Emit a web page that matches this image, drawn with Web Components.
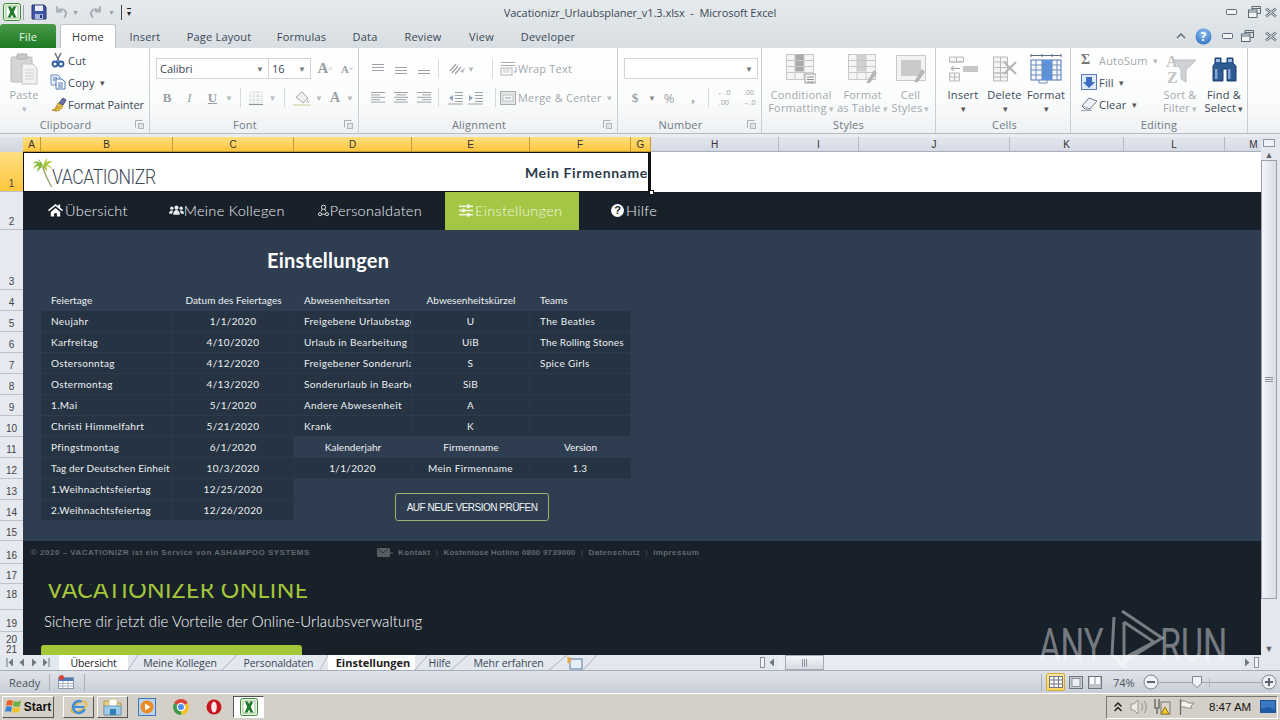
<!DOCTYPE html>
<html lang="de">
<head>
<meta charset="utf-8">
<title>Vacationizr_Urlaubsplaner_v1.3.xlsx - Microsoft Excel</title>
<style>
  html, body { margin: 0; height: 720px; width: 1280px; overflow: hidden; }
  body { font-family: "Open Sans", "Liberation Sans", sans-serif; font-size: 11px; }
</style>
</head>
<body>
<excel-window></excel-window>
<script>
const ICONS = {
  excel: '<svg viewBox="0 0 18 18" width="18" height="18"><rect x=".5" y=".5" width="17" height="17" rx="2" fill="#e8f2e0" stroke="#3f8a3c"/><rect x="3" y="3" width="12" height="12" fill="#fff" stroke="#9dc59a"/><path d="M5 3.5h3l1 2.5 1.2-2.5h3L10.8 9l2.6 5.5h-3L9 11.6l-1.3 2.9h-3L7.2 9z" fill="#1f7a2a"/></svg>',
  save: '<svg viewBox="0 0 16 16" width="16" height="16"><path d="M1 1h12l2 2v12H1z" fill="#3f55a8" stroke="#27346f"/><rect x="4" y="1.5" width="8" height="5.5" fill="#e9eef8"/><rect x="4" y="10" width="8" height="5" fill="#a9b7dc"/><rect x="9" y="11" width="2" height="3" fill="#27346f"/></svg>',
  undo: '<svg viewBox="0 0 14 14" width="14" height="14"><path d="M3 1.5v5h5M3.4 6.3C5.5 3.5 10 3.7 11.5 6.5c1 2 .4 4.3-1.5 6" fill="none" stroke="#a9b0b8" stroke-width="2"/></svg>',
  redo: '<svg viewBox="0 0 14 14" width="14" height="14"><path d="M11 1.5v5H6M10.6 6.3C8.5 3.5 4 3.7 2.5 6.5c-1 2-.4 4.3 1.5 6" fill="none" stroke="#a9b0b8" stroke-width="2"/></svg>',
  paste: '<svg viewBox="0 0 28 32" width="28" height="32"><rect x="1" y="4" width="21" height="25" rx="1" fill="#d5d5d3" stroke="#bdbdbb"/><rect x="7" y="1" width="10" height="5" rx="1" fill="#c6c6c4" stroke="#aeaeac"/><path d="M12 11h11l4 4v16H12z" fill="#f2f2f1" stroke="#c4c4c4"/><path d="M15 17h9M15 20h9M15 23h9M15 26h9" stroke="#d0d0d0"/></svg>',
  cut: '<svg viewBox="0 0 16 16" width="16" height="16"><path d="M5 1l4 8M11 1L7 9" stroke="#6a7683" stroke-width="1.6" fill="none"/><circle cx="5" cy="12" r="2.5" fill="#fff" stroke="#2f5ea8" stroke-width="1.8"/><circle cx="11" cy="12" r="2.5" fill="#fff" stroke="#2f5ea8" stroke-width="1.8"/></svg>',
  copy: '<svg viewBox="0 0 16 16" width="16" height="16"><path d="M1 1h7l2 2v8H1z" fill="#e9eef7" stroke="#6f8ec0"/><path d="M6 5h6l3 3v7H6z" fill="#fff" stroke="#4f74b4"/><path d="M3 4h4M3 6h2M8 9h5M8 11h5M8 13h5" stroke="#4f74b4"/></svg>',
  painter: '<svg viewBox="0 0 18 16" width="18" height="16"><path d="M9 7l4-5 3 2-3 5z" fill="#6d6fa8" stroke="#474a80"/><path d="M2 14c3 0 4-3 6-7l5 3c-2 3-3 5-7 5z" fill="#e9c257" stroke="#b58d27"/><path d="M5 14l3-4M8 13l2-3" stroke="#b58d27"/></svg>',
  launcher: '<svg viewBox="0 0 9 9" width="9" height="9"><path d="M.5.5h7M.5.5v7" stroke="#a7adb4" fill="none"/><rect x="3.5" y="3.5" width="5" height="5" fill="#dfe3e7" stroke="#b1b7bd"/></svg>',
  border: '<svg viewBox="0 0 14 14" width="14" height="14"><path d="M1 1h12v12H1zM1 5h12M1 9h12M5 1v12M9 1v12" stroke="#c6c9cd" stroke-dasharray="1 1" fill="none"/><path d="M0 13.5h14" stroke="#8c9198"/></svg>',
  fill: '<svg viewBox="0 0 18 16" width="18" height="16"><path d="M3 7l6-5 6 6-5 5z" fill="#f0f0f0" stroke="#a8a8a8"/><path d="M14 9c2 2 2 4 1 4s-1-2-1-4z" fill="#b9b9b9"/><rect x="0" y="14" width="18" height="2" fill="#e3e4c6"/></svg>',
  alignTop: lines([[2,14],[2,14],[2,14]], 2),
  alignMid: lines([[2,14],[2,14],[2,14]], 5),
  alignBot: lines([[2,14],[2,14],[2,14]], 8),
  alignL: lines([[1,15],[1,10],[1,15],[1,10],[1,15]], 1, 2.4),
  alignC: lines([[1,15],[3,13],[1,15],[3,13],[1,15]], 1, 2.4),
  alignR: lines([[1,15],[6,15],[1,15],[6,15],[1,15]], 1, 2.4),
  orient: '<svg viewBox="0 0 18 14" width="18" height="14"><path d="M2 9l6-7M4 11l6-7M7 12l6-7" stroke="#9da1a6" stroke-width="1.3"/><path d="M12 9l5-3-2 5" fill="#b5b9bd"/></svg>',
  indentL: '<svg viewBox="0 0 16 14" width="16" height="14"><path d="M7 1.5h8M7 4.5h8M7 7.5h8M7 10.5h8M0 13h15" stroke="#9ea3a8"/><path d="M5 4L1 7l4 3z" fill="#8ea3bf"/></svg>',
  indentR: '<svg viewBox="0 0 16 14" width="16" height="14"><path d="M7 1.5h8M7 4.5h8M7 7.5h8M7 10.5h8M0 13h15" stroke="#9ea3a8"/><path d="M1 4l4 3-4 3z" fill="#8ea3bf"/></svg>',
  wrap: '<svg viewBox="0 0 18 15" width="18" height="15"><path d="M1 1.5h14M1 4.5h14" stroke="#a9adb1"/><rect x="1" y="7" width="11" height="7" fill="#fff" stroke="#b0b4b8"/><path d="M3 9h7M3 11h7" stroke="#c4c7ca"/><path d="M16 6v5h-2" stroke="#8ea3bf" fill="none"/></svg>',
  merge: '<svg viewBox="0 0 16 14" width="16" height="14"><rect x=".5" y=".5" width="15" height="13" fill="#e3e5e7" stroke="#a9adb1"/><rect x="3" y="4" width="10" height="6" fill="#f7f7f7" stroke="#c0c3c6"/><path d="M5 7h6" stroke="#8ea3bf"/></svg>',
  cond: grid('#a7a9ab', '<rect x="19" y="20" width="11" height="9" fill="#f4f4f4" stroke="#9fa2a5"/><path d="M21 23h7M21 25.5h7M21 28h7" stroke="#8c9093"/>'),
  table: grid('#cfd1d3', '<path d="M18 29l8-13 3 3-7 10z" fill="#b3b5b7"/>'),
  cellst: '<svg viewBox="0 0 30 28" width="30" height="28"><rect x=".5" y=".5" width="29" height="25" fill="#f3f3f3" stroke="#c9cbcd"/><rect x="5" y="5" width="20" height="16" fill="#c9cacc"/><path d="M18 27l8-13 3 3-7 10z" fill="#b3b5b7"/></svg>',
  insert: '<svg viewBox="0 0 31 26" width="31" height="26"><path d="M1.5 1h14v5h-14zM1.5 6h14M8.5 1v5M1.5 17h10v8h-10zM1.5 21h10M6.5 17v8" fill="#f6f6f6" stroke="#b7babd"/><rect x="15" y="10" width="15" height="6" fill="#c5c7c9"/><path d="M3 12.5h9M3 12.5l3-2.5M3 12.5l3 2.5" stroke="#a0a3a6" fill="none"/></svg>',
  del: '<svg viewBox="0 0 26 26" width="26" height="26"><path d="M1.5 1h14v16h-14zM1.5 6h14M1.5 11.5h14M1.5 17h14v8h-14zM1.5 21h14M8.5 1v24" fill="#f4f4f4" stroke="#b7babd"/><path d="M12 6l12 12M24 6L12 18" stroke="#b3b5b8" stroke-width="2"/></svg>',
  format: '<svg viewBox="0 0 32 30" width="32" height="30"><rect x="1" y="6" width="30" height="20" fill="#f4f8fd" stroke="#4f74b4"/><rect x="12" y="6" width="10" height="20" fill="#5a93e0"/><path d="M6 6v20M12 6v20M22 6v20M27 6v20M1 11h30M1 16h30M1 21h30" stroke="#6d8cb8"/><path d="M1 1.5h30M1 0v3M31 0v3M12 0v3M22 0v3" stroke="#5a6a7e"/><path d="M9 26v3h8v-3" fill="none" stroke="#6d8cb8"/></svg>',
  fillDown: '<svg viewBox="0 0 16 16" width="16" height="16"><rect x=".5" y=".5" width="15" height="15" fill="#dfe9f7" stroke="#5a7fb8"/><path d="M5 3h6v5h3l-6 6-6-6h3z" fill="#3d6fc0"/></svg>',
  clear: '<svg viewBox="0 0 17 14" width="17" height="14"><path d="M1 9l7-8 8 3-7 8z" fill="#eef1f5" stroke="#6f7d90"/><path d="M1 9l3 3h5" fill="#fff" stroke="#6f7d90"/><path d="M0 13.5h11" stroke="#a9adb3"/></svg>',
  sortfilter: '<svg viewBox="0 0 32 32" width="32" height="32"><text x="2" y="14" font-family="Liberation Serif, serif" font-weight="700" font-size="16" fill="#c2c4c7">A</text><text x="3" y="30" font-family="Liberation Serif, serif" font-weight="700" font-size="16" fill="#c2c4c7">Z</text><path d="M10 7h22L22 17v12l-5-3v-9z" fill="#cfd1d4" stroke="#bdbfc2"/></svg>',
  binoc: '<svg viewBox="0 0 28 28" width="28" height="28"><path d="M5 3h6v5h6V3h6v5l3 3v15h-9V14h-4v12H3V11l2-3z" fill="#2f5b93" stroke="#1d3f6e"/><rect x="5" y="14" width="2.5" height="10" fill="#7fa5d5"/><rect x="18" y="14" width="2.5" height="10" fill="#7fa5d5"/><rect x="6" y="4" width="4" height="3" fill="#9bbbe0"/><rect x="18" y="4" width="4" height="3" fill="#9bbbe0"/></svg>',
  help: '<svg viewBox="0 0 17 17" width="17" height="17"><defs><radialGradient id="h" cx=".5" cy=".3" r=".8"><stop offset="0" stop-color="#8fc0f0"/><stop offset="1" stop-color="#2a6bc0"/></radialGradient></defs><circle cx="8.5" cy="8.5" r="8" fill="url(#h)"/></svg>',
  chevUp: '<svg viewBox="0 0 10 8" width="10" height="8"><path d="M1 6l4-4 4 4" fill="none" stroke="#5b6670" stroke-width="1.4"/></svg>',
  min: '<svg viewBox="0 0 11 7" width="11" height="7"><rect x=".5" y=".5" width="10" height="5" rx="1" fill="#f1f3f5" stroke="#5c6873"/></svg>',
  restore: '<svg viewBox="0 0 13 12" width="13" height="12"><path d="M4 .5h8.5v7H9M4 .5V4" fill="none" stroke="#5c6873"/><path d="M4 2.5h8" stroke="#5c6873"/><rect x=".5" y="4" width="8.5" height="7.5" fill="#f1f3f5" stroke="#5c6873"/><path d="M.5 6H9" stroke="#5c6873"/></svg>',
  close: '<svg viewBox="0 0 12 11" width="12" height="11"><path d="M1 1.5l10 8M11 1.5l-10 8" stroke="#5c6873" stroke-width="2.6"/><path d="M1 1.5l10 8M11 1.5l-10 8" stroke="#eef0f2" stroke-width="1"/></svg>',
  palm: '<svg viewBox="0 0 20 32" width="20" height="32"><path d="M10 9c-1-3-3-6-5-7 1 2 2 3 2 4C5 4 2 4 0 6c2 0 4 0 5 1-2 0-4 2-5 5 2-2 4-3 6-3-1 2-2 4-2 6 2-2 3-4 5-5 0 0 0-1 1-1z" fill="#86b83a"/><path d="M10 9c1-3 3-7 4-8 0 2 0 3-1 5 2-2 4-2 7-1-2 0-4 1-6 3 2 0 4 1 5 4-2-2-4-3-6-3 1 2 1 4 1 6-1-2-3-4-4-6z" fill="#a4c639"/><path d="M9 10c2 6 5 13 9 20l1-.6C15.5 23 12 16 10.5 9.5z" fill="#8d9a5a"/></svg>',
  home: '<svg viewBox="0 0 16 14" width="15" height="14"><path d="M8 .5L0 7l1 1.3L8 2.6l7 5.7L16 7l-3-2.4V1h-2v2zM3 9v5h3.5v-3.5h3V14H13V9L8 4.8z" fill="#fff"/></svg>',
  team: '<svg viewBox="0 0 16 10" width="15" height="10"><g fill="#e9ecef"><circle cx="3" cy="3" r="1.8"/><circle cx="13" cy="3" r="1.8"/><circle cx="8" cy="2.5" r="2.2"/><path d="M0 9c0-2 1-3.5 3-3.5.6 0 1.1.1 1.5.4C3.8 6.7 3.5 7.8 3.5 9zM16 9c0-2-1-3.5-3-3.5-.6 0-1.1.1-1.5.4.7.8 1 1.9 1 3.1zM4.5 10c0-3 1.5-5 3.5-5s3.5 2 3.500 5z"/></g></svg>',
  person: '<svg viewBox="0 0 12 13" width="11" height="13"><g fill="none" stroke="#e9ecef"><circle cx="6" cy="3" r="2.3"/><circle cx="2.2" cy="10.5" r="1.7"/><circle cx="9.8" cy="10.5" r="1.7"/><path d="M3.5 7.5L4.5 5M8.5 7.5L7.5 5M4 10.5h4"/></g></svg>',
  sliders: '<svg viewBox="0 0 14 13" width="14" height="13"><g fill="#eef5da"><rect y="1.5" width="14" height="1.6"/><rect y="5.7" width="14" height="1.6"/><rect y="9.9" width="14" height="1.6"/><rect x="8" y=".3" width="3" height="4" rx="1"/><rect x="3" y="4.5" width="3" height="4" rx="1"/><rect x="8" y="8.7" width="3" height="4" rx="1"/></g></svg>',
  mail: '<svg viewBox="0 0 16 9" width="16" height="9"><rect x="0" y="0" width="13" height="9" rx="1" fill="#585e64"/><path d="M1 1l5 4 5-4" stroke="#2a3036" fill="none"/><path d="M13 5h3" stroke="#585e64"/></svg>',
  navFirst: '<svg viewBox="0 0 8 9" width="8" height="9"><path d="M1 0v9" stroke="#6d7885"/><path d="M7 .5L2.5 4.5 7 8.5z" fill="#6d7885"/></svg>',
  navPrev: '<svg viewBox="0 0 6 9" width="6" height="9"><path d="M5 .5L.5 4.5 5 8.5z" fill="#6d7885"/></svg>',
  navNext: '<svg viewBox="0 0 6 9" width="6" height="9"><path d="M1 .5l4.5 4L1 8.5z" fill="#6d7885"/></svg>',
  navLast: '<svg viewBox="0 0 8 9" width="8" height="9"><path d="M7 0v9" stroke="#6d7885"/><path d="M1 .5l4.5 4L1 8.5z" fill="#6d7885"/></svg>',
  newSheet: '<svg viewBox="0 0 16 14" width="16" height="14"><rect x="3" y="3" width="12" height="10" fill="#e7edf7" stroke="#5a78a8"/><path d="M1 0l1 2 2-1-1 2 2 1-2 1 1 2-2-1-1 2-.5-2L0 5l1-1-1-2z" fill="#eba63a"/></svg>',
  macro: '<svg viewBox="0 0 16 14" width="16" height="14"><rect x=".5" y="2.5" width="15" height="11" fill="#fff" stroke="#8a97a8"/><rect x="1" y="3" width="14" height="3" fill="#4f78b8"/><path d="M1 8.5h14M1 11h14M5 6v7M10 6v7" stroke="#a8b3c2"/><circle cx="3.5" cy="2.5" r="2.5" fill="#d6453a"/></svg>',
  viewNormal: '<svg viewBox="0 0 14 12" width="14" height="12"><rect x=".5" y=".5" width="13" height="11" fill="#fff" stroke="#6d7580"/><path d="M.5 4h13M.5 8h13M5 .5v11M9.5 .5v11" stroke="#6d7580"/></svg>',
  viewPage: '<svg viewBox="0 0 14 13" width="14" height="13"><rect x=".5" y=".5" width="13" height="12" fill="#c9ced6" stroke="#6d7580"/><rect x="3" y="2.5" width="8" height="8" fill="#eef0f3" stroke="#8a919b"/></svg>',
  viewBreak: '<svg viewBox="0 0 14 13" width="14" height="13"><rect x=".5" y=".5" width="13" height="12" fill="#bfc4cb" stroke="#6d7580"/><rect x="2" y="1" width="4" height="7" fill="#fff"/><rect x="8" y="1" width="4" height="7" fill="#fff"/></svg>',
  zoomMinus: '<svg viewBox="0 0 16 16" width="16" height="16"><circle cx="8" cy="8" r="7" fill="#eef0f4" stroke="#7d8694"/><rect x="4" y="7" width="8" height="2" fill="#5a6472"/></svg>',
  zoomPlus: '<svg viewBox="0 0 16 16" width="16" height="16"><circle cx="8" cy="8" r="7" fill="#eef0f4" stroke="#7d8694"/><path d="M4 7h3V4h2v3h3v2H9v3H7V9H4z" fill="#5a6472"/></svg>',
  thumb: '<svg viewBox="0 0 10 12" width="10" height="12"><path d="M.5.5h9v7L5 11.5.5 7.5z" fill="#f2f3f6" stroke="#7d8694"/></svg>',
  winflag: '<svg viewBox="0 0 18 16" width="18" height="16"><path d="M2 2c2-1.5 4-1 6 0L7 7C5 6 3 6 1 7z" fill="#e8632a"/><path d="M9 2c2 1 4 1 7-.5L15 7c-2 1-4 1-7 0z" fill="#6cb33f"/><path d="M1 8c2-1 4-1 6 0l-1 5c-2-1-4-1-6 0z" fill="#3a82d6"/><path d="M8 8c2 1 4 1 7 0l-1 5c-3 1-5 1-7 0z" fill="#f2c12e"/></svg>',
  ie: '<svg viewBox="0 0 18 18" width="18" height="18"><ellipse cx="9" cy="9" rx="8.5" ry="4" fill="none" stroke="#e9b22c" stroke-width="1.5" transform="rotate(-30 9 9)"/><circle cx="9" cy="9" r="6" fill="none" stroke="#3c8fdc" stroke-width="2.6" stroke-dasharray="28 10" transform="rotate(20 9 9)"/><rect x="4" y="8" width="10" height="2" fill="#3c8fdc"/></svg>',
  folder: '<svg viewBox="0 0 20 18" width="20" height="18"><path d="M1 3h6l2 2h9v12H1z" fill="#e9cf7b" stroke="#b9994a"/><rect x="6" y="1" width="8" height="9" fill="#fdfdf5" stroke="#c9c5a5"/><path d="M1 8h17v9H1z" fill="#9fcbe8" stroke="#6c9fc0"/><rect x="7" y="11" width="6" height="6" fill="#2f7fb5"/></svg>',
  media: '<svg viewBox="0 0 18 18" width="18" height="18"><rect x=".5" y=".5" width="17" height="17" fill="#b9d3ee" stroke="#3f78b8"/><circle cx="9" cy="9" r="6.5" fill="#ef8a1e"/><path d="M7 5.5l5.5 3.5L7 12.5z" fill="#fff"/></svg>',
  chrome: '<svg viewBox="0 0 16 16" width="16" height="16"><path d="M8 8L1.1 4A8 8 0 0 1 14.9 4z" fill="#d9453a"/><path d="M8 8l6.9-4A8 8 0 0 1 8 16z" fill="#f3c32f"/><path d="M8 8v8A8 8 0 0 1 1.1 4z" fill="#3d9c48"/><circle cx="8" cy="8" r="3.6" fill="#4a8df0" stroke="#fff" stroke-width="1.3"/></svg>',
  opera: '<svg viewBox="0 0 16 16" width="16" height="16"><circle cx="8" cy="8" r="7.5" fill="#c8141c"/><ellipse cx="8" cy="8" rx="2.8" ry="5.5" fill="#fbeaea"/></svg>',
  tray2: '<svg viewBox="0 0 10 12" width="10" height="12"><path d="M1.5 5.5L5 2l3.5 3.5M1.5 10L5 6.5 8.5 10" fill="none" stroke="#222" stroke-width="1.5"/></svg>',
  speaker: '<svg viewBox="0 0 18 16" width="18" height="16"><path d="M1 5h3l4-4v14l-4-4H1z" fill="#ecebe6" stroke="#9a9a94"/><path d="M11 4c2 2 2 6 0 8M14 2c3 3 3 9 0 12" fill="none" stroke="#8e8e88"/></svg>',
  network: '<svg viewBox="0 0 17 16" width="17" height="16"><rect x="7" y="3" width="9" height="12" fill="#d9d6cb" stroke="#777"/><path d="M1 0v9h4V0M3 9v6" fill="none" stroke="#555" stroke-width="1.2"/><path d="M7 15l4-7 4 7z" fill="#f2c82f" stroke="#9b7a10"/></svg>',
  flag: '<svg viewBox="0 0 16 16" width="16" height="16"><path d="M1.5 0v16" stroke="#6b6b66" stroke-width="1.3"/><path d="M2 2h5l2 2h6l-3 3 1 2H8L6 8H2z" fill="#f4f3ee" stroke="#8b8b85"/></svg>',
  desk: '<svg viewBox="0 0 16 14" width="16" height="14"><rect x=".5" y=".5" width="15" height="12" fill="#3a78c2" stroke="#204f8c"/><path d="M.5 9l8-2 7 3v3H.5z" fill="#1f5aa3"/></svg>'
};

function lines(spans, top, step) {
  const s = step || 3;
  const d = spans.map((sp, i) => 'M' + sp[0] + ' ' + (top + i * s + .5) + 'H' + sp[1]).join('');
  return '<svg viewBox="0 0 16 14" width="16" height="14"><path d="' + d + '" stroke="#9ea2a7" fill="none"/></svg>';
}
function grid(fill, extra) {
  return '<svg viewBox="0 0 30 30" width="30" height="30"><rect x=".5" y=".5" width="27" height="25" fill="#f5f5f5" stroke="#c6c8ca"/><rect x="9" y=".5" width="9" height="17" fill="' + fill + '"/><path d="M9 .5v25M18 .5v25M.5 6.5h27M.5 12.5h27M.5 18.5h27" stroke="#c6c8ca"/>' + extra + '</svg>';
}

class XIcon extends HTMLElement {
  connectedCallback() {
    this.attachShadow({ mode: 'open' });
    this.shadowRoot.innerHTML = `<style>:host{display:inline-flex;align-items:center;justify-content:center;flex:none}svg{display:block}</style>` + (ICONS[this.getAttribute('name')] || '');
  }
}
customElements.define('x-icon', XIcon);

class TitleBar extends HTMLElement {
  connectedCallback() {
    this.attachShadow({ mode: 'open' });
    this.shadowRoot.innerHTML = `
      <style>
        :host { display: grid; grid-template-columns: 1fr auto 1fr; height: 24px; align-items: center; color: #3a4856; font-size: 11px; }
        .qat { display: flex; align-items: center; padding-left: 3px; }
        .sep { width: 1px; height: 15px; background: #9aa2aa; }
        .caret { font-size: 7px; color: #9aa0a6; }
        .title { white-space: pre; letter-spacing: -.05px; }
        .win { display: flex; align-items: center; justify-content: flex-end; padding-right: 3px; }
      </style>
      <div class="qat">
        <x-icon name="excel"></x-icon>
        <span class="sep" style="margin:0 7px 0 2px"></span>
        <x-icon name="save" style="margin-right:6px"></x-icon>
        <x-icon name="undo" style="margin-left:1px"></x-icon>
        <span class="caret" style="margin:0 8px 0 4px">▼</span>
        <x-icon name="redo" style="margin-left:2px"></x-icon>
        <span class="caret" style="margin:0 6px 0 5px">▼</span>
        <span class="sep" style="background:#444;margin-right:3px"></span>
        <span style="font-size:8px;color:#222;line-height:8px;border-top:1px solid #222;height:7px;margin-left:2px">▾</span>
      </div>
      <div class="title">Vacationizr_Urlaubsplaner_v1.3.xlsx  -  Microsoft Excel</div>
      <div class="win"><x-icon name="min" style="margin-right:11px"></x-icon><x-icon name="restore" style="margin-right:4px"></x-icon><x-icon name="close"></x-icon></div>`;
  }
}
customElements.define('title-bar', TitleBar);

class RibbonTabs extends HTMLElement {
  connectedCallback() {
    this.attachShadow({ mode: 'open' });
    const tabs = [['Insert', 130, 30], ['Page Layout', 188, 62], ['Formulas', 278, 47], ['Data', 353, 24], ['Review', 405, 36], ['View', 469, 25], ['Developer', 522, 52]];
    let x = 116;
    const html = tabs.map(t => {
      const gap = t[1] - x;
      x = t[1] + t[2];
      return `<span class="tab" style="margin-left:${gap}px;width:${t[2]}px">${t[0]}</span>`;
    }).join('');
    this.shadowRoot.innerHTML = `
      <style>
        :host { display: flex; height: 24px; color: #3a4856; font-size: 11px; align-items: stretch; letter-spacing: .2px; }
        .tab { display: flex; align-items: center; justify-content: center; white-space: nowrap; }
        .file { width: 56px; background: linear-gradient(#4a9a48, #1c7a24); color: #eaf5e6; border-radius: 3px 3px 0 0; display: flex; align-items: center; justify-content: center; }
        .home { width: 56px; margin-left: 4px; box-sizing: border-box; background: #fff; border: 1px solid #bcc4cc; border-bottom: 0; border-radius: 3px 3px 0 0; display: flex; align-items: center; justify-content: center; color: #333; }
        .right { margin-left: auto; display: flex; align-items: center; padding-right: 3px; }
        .help { position: relative; display: inline-flex; width: 17px; height: 17px; align-items: center; justify-content: center; margin: 0 10px 0 9px; }
        .help x-icon { position: absolute; inset: 0; }
        .help b { position: relative; color: #fff; font-size: 12px; }
      </style>
      <span class="file">File</span>
      <span class="home">Home</span>
      ${html}
      <div class="right">
        <x-icon name="chevUp"></x-icon>
        <span class="help"><x-icon name="help"></x-icon><b>?</b></span>
        <x-icon name="min"></x-icon>
        <x-icon name="restore" style="margin-left:8px"></x-icon>
        <x-icon name="close" style="margin-left:11px"></x-icon>
      </div>`;
  }
}
customElements.define('ribbon-tabs', RibbonTabs);

class RibbonGroup extends HTMLElement {
  connectedCallback() {
    this.attachShadow({ mode: 'open' });
    const hasL = this.hasAttribute('launcher');
    const launcher = hasL ? '<x-icon name="launcher" class="lnch"></x-icon>' : '';
    this.shadowRoot.innerHTML = `
      <style>
        :host { display: flex; flex-direction: column; flex: none; height: 85px; box-sizing: border-box; border-right: 1px solid #c8ced4; }
        .body { flex: 1; display: flex; min-height: 0; padding-top: 2px; padding-left: var(--pad, 0); }
        .label { height: 16px; display: flex; align-items: center; justify-content: center; color: #6f7a85; font-size: 11px; position: relative; letter-spacing: .2px; margin-bottom: 1px; padding-right: ${hasL ? 18 : 0}px; padding-left: var(--labpad, 0); }
        .lnch { position: absolute; right: 5px; top: 4px; }
      </style>
      <div class="body"><slot></slot></div>
      <div class="label">${this.getAttribute('label')}${launcher}</div>`;
  }
}
customElements.define('ribbon-group', RibbonGroup);

class RibbonBig extends HTMLElement {
  connectedCallback() {
    this.attachShadow({ mode: 'open' });
    const l = (this.getAttribute('label') || '').split('|');
    const dim = this.hasAttribute('dim');
    this.shadowRoot.innerHTML = `
      <style>
        :host { display: flex; flex-direction: column; align-items: center; flex: none; height: 66px; font-size: 11px; color: ${dim ? '#a3a8ad' : '#3a4856'}; letter-spacing: .2px; }
        .ic { height: 38px; display: flex; align-items: center; }
        .ln { height: 13px; line-height: 13px; white-space: nowrap; }
        .caret { font-size: 9px; color: ${dim ? '#b9bdc1' : '#555'}; margin-left: 2px; }
      </style>
      <div class="ic"><x-icon name="${this.getAttribute('icon')}"></x-icon></div>
      <div class="ln">${l[0]}</div>
      <div class="ln">${l[1] || ''}<span class="caret">▾</span></div>`;
  }
}
customElements.define('ribbon-big', RibbonBig);

class RibbonSmall extends HTMLElement {
  connectedCallback() {
    this.attachShadow({ mode: 'open' });
    const dim = this.hasAttribute('dim');
    const ic = this.getAttribute('icon');
    const glyph = this.getAttribute('glyph');
    this.shadowRoot.innerHTML = `
      <style>
        :host { display: flex; align-items: center; height: 22px; font-size: 11px; color: ${dim ? '#a3a8ad' : '#3a4856'}; white-space: nowrap; letter-spacing: .2px; }
        .ic { width: 18px; display: flex; justify-content: flex-start; flex: none; font: bold 14px "Liberation Serif", serif; color: #777; }
        .caret { font-size: 9px; color: ${dim ? '#b9bdc1' : '#555'}; margin-left: 5px; }
      </style>
      <span class="ic">${glyph ? glyph : `<x-icon name="${ic}"></x-icon>`}</span><span>${this.getAttribute('label')}</span>${this.hasAttribute('caret') ? '<span class="caret">▾</span>' : ''}`;
  }
}
customElements.define('ribbon-small', RibbonSmall);

class ExcelRibbon extends HTMLElement {
  connectedCallback() {
    this.attachShadow({ mode: 'open' });
    this.shadowRoot.innerHTML = `
      <style>
        :host { display: flex; height: 86px; box-sizing: border-box; border-bottom: 1px solid #b6bcc2; background: linear-gradient(#ffffff 0%, #fbfcfc 60%, #eef1f3 100%); }
        .col { display: flex; flex-direction: column; margin-top: -1px; }
        .rows { display: flex; flex-direction: column; padding-top: 8px; gap: 8px; }
        .row { display: flex; align-items: center; height: 21px; }
        .c { display: flex; align-items: center; justify-content: center; flex: none; height: 21px; color: #9a9fa4; }
        .sep { width: 1px; height: 19px; background: #d6dadd; flex: none; }
        .sepc { display: flex; justify-content: center; flex: none; }
        .combo { display: flex; align-items: center; justify-content: space-between; box-sizing: border-box; height: 21px; border: 1px solid #cfd4d9; background: #fff; padding: 0 4px 0 3px; font-size: 11px; color: #3a4856; flex: none; }
        .caret { font-size: 8px; color: #777; }
        .cr { font-size: 8px; color: #b5b9bd; }
        .dec { font-size: 7px; line-height: 10px; flex-direction: column; text-align: center; }
        b, i, u { font-family: "Liberation Serif", serif; font-size: 13px; }
      </style>
      <ribbon-group label="Clipboard" launcher style="width:150px">
        <ribbon-big icon="paste" label="Paste|" dim style="width:38px;margin-left:5px"></ribbon-big>
        <div class="col" style="margin-left:7px">
          <ribbon-small icon="cut" label="Cut"></ribbon-small>
          <ribbon-small icon="copy" label="Copy" caret></ribbon-small>
          <ribbon-small icon="painter" label="Format Painter" style="letter-spacing:-.05px"></ribbon-small>
        </div>
      </ribbon-group>
      <ribbon-group label="Font" launcher style="width:209px">
        <div class="rows" style="padding-left:6px">
          <div class="row">
            <span class="combo" style="width:113px">Calibri<span class="caret">▼</span></span>
            <span class="combo" style="width:43px;margin-left:-1px">16<span class="caret">▼</span></span>
            <span class="c" style="width:20px;font:bold 15px 'Liberation Serif',serif;margin-left:4px">A<sup style="font-size:7px">˄</sup></span>
            <span class="c" style="width:20px;font:bold 11px 'Liberation Serif',serif;margin-left:2px">A<sup style="font-size:7px">˅</sup></span>
          </div>
          <div class="row">
            <span class="c" style="width:22px"><b>B</b></span>
            <span class="c" style="width:23px"><i>I</i></span>
            <span class="c" style="width:23px"><u style="font-weight:700">U</u></span>
            <span class="c cr" style="width:10px">▼</span>
            <span class="sepc" style="width:12px"><span class="sep"></span></span>
            <span class="c" style="width:20px"><x-icon name="border"></x-icon></span>
            <span class="c cr" style="width:13px">▼</span>
            <span class="sepc" style="width:10px"><span class="sep"></span></span>
            <span class="c" style="width:25px"><x-icon name="fill"></x-icon></span>
            <span class="c cr" style="width:10px">▼</span>
            <span class="c" style="width:22px;font:bold 14px 'Liberation Serif',serif">A</span>
            <span class="c cr" style="width:8px">▼</span>
          </div>
        </div>
      </ribbon-group>
      <ribbon-group label="Alignment" launcher style="width:259px">
        <div class="rows" style="padding-left:7px">
          <div class="row">
            <span class="c" style="width:23px"><x-icon name="alignTop"></x-icon></span>
            <span class="c" style="width:23px"><x-icon name="alignMid"></x-icon></span>
            <span class="c" style="width:23px"><x-icon name="alignBot"></x-icon></span>
            <span class="sepc" style="width:6px"><span class="sep"></span></span>
            <span class="c" style="width:44px;justify-content:flex-start;padding-left:7px;box-sizing:border-box"><x-icon name="orient"></x-icon><span class="cr" style="margin-left:1px">▼</span></span>
            <span class="sepc" style="width:15px"><span class="sep"></span></span>
            <ribbon-small icon="wrap" label="Wrap Text" dim></ribbon-small>
          </div>
          <div class="row">
            <span class="c" style="width:23px"><x-icon name="alignL"></x-icon></span>
            <span class="c" style="width:23px"><x-icon name="alignC"></x-icon></span>
            <span class="c" style="width:23px"><x-icon name="alignR"></x-icon></span>
            <span class="sepc" style="width:6px"><span class="sep"></span></span>
            <span class="c" style="width:3px"></span>
            <span class="c" style="width:23px"><x-icon name="indentL"></x-icon></span>
            <span class="c" style="width:18px;margin-right:5px"><x-icon name="indentR"></x-icon></span>
            <span class="sepc" style="width:10px"><span class="sep"></span></span>
            <ribbon-small icon="merge" label="Merge &amp; Center" caret dim></ribbon-small>
          </div>
        </div>
      </ribbon-group>
      <ribbon-group label="Number" launcher style="width:144px">
        <div class="rows" style="padding-left:6px">
          <div class="row"><span class="combo" style="width:134px;justify-content:flex-end"><span class="caret">▼</span></span></div>
          <div class="row">
            <span class="c" style="width:22px;font:bold 13px 'Liberation Serif',serif">$</span>
            <span class="c cr" style="width:12px;color:#888">▼</span>
            <span class="c" style="width:22px;font-size:13px">%</span>
            <span class="c" style="width:26px;font:bold 14px 'Liberation Serif',serif">,</span>
            <span class="sepc" style="width:4px"><span class="sep"></span></span>
            <span class="c dec" style="width:28px"><span>←.0</span><span>.00</span></span>
            <span class="c dec" style="width:22px"><span>.00</span><span>→.0</span></span>
          </div>
        </div>
      </ribbon-group>
      <ribbon-group label="Styles" style="width:174px;--pad:8px">
        <ribbon-big icon="cond" label="Conditional|Formatting" dim style="width:62px"></ribbon-big>
        <ribbon-big icon="table" label="Format|as Table" dim style="width:61px"></ribbon-big>
        <ribbon-big icon="cellst" label="Cell|Styles" dim style="width:35px"></ribbon-big>
      </ribbon-group>
      <ribbon-group label="Cells" style="width:135px;--pad:5px;--labpad:3px">
        <ribbon-big icon="insert" label="Insert|" style="width:44px"></ribbon-big>
        <ribbon-big icon="del" label="Delete|" style="width:39px"></ribbon-big>
        <ribbon-big icon="format" label="Format|" style="width:44px"></ribbon-big>
      </ribbon-group>
      <ribbon-group label="Editing" style="width:177px;--pad:10px">
        <div class="col" style="width:79px;flex:none">
          <ribbon-small glyph="Σ" label="AutoSum" caret dim></ribbon-small>
          <ribbon-small icon="fillDown" label="Fill" caret></ribbon-small>
          <ribbon-small icon="clear" label="Clear" caret></ribbon-small>
        </div>
        <ribbon-big icon="sortfilter" label="Sort &amp;|Filter" dim style="width:40px"></ribbon-big>
        <ribbon-big icon="binoc" label="Find &amp;|Select" style="width:48px"></ribbon-big>
      </ribbon-group>`;
  }
}
customElements.define('excel-ribbon', ExcelRibbon);

class ColHeaders extends HTMLElement {
  connectedCallback() {
    this.attachShadow({ mode: 'open' });
    const cols = [['A', 18, 1], ['B', 132, 1], ['C', 121, 1], ['D', 118, 1], ['E', 118, 1], ['F', 101, 1], ['G', 20, 1], ['H', 128], ['I', 80], ['J', 151], ['K', 114], ['L', 101], ['M', 58]];
    this.shadowRoot.innerHTML = `
      <style>
        :host { display: flex; height: 15px; overflow: hidden; font: 10px "Liberation Sans", sans-serif; color: #333; }
        .corner { width: 23px; flex: none; background: linear-gradient(#e0e4ea, #cfd4dc); }
        .h { flex: none; display: flex; align-items: center; justify-content: center; box-sizing: border-box; border-right: 1px solid #b5bac4; background: linear-gradient(#e3e6ee, #d6dae4); border-bottom: 1px solid #a9b0bc; padding-top: 1px; }
        .on { background: linear-gradient(#ffdf80, #ffc63e); border-right: 1px solid #c29a3a; border-bottom: 1px solid #c29a3a; }
      </style>
      <div class="corner"></div>
      ${cols.map(c => `<div class="h${c[2] ? ' on' : ''}" style="width:${c[1]}px">${c[0]}</div>`).join('')}`;
  }
}
customElements.define('col-headers', ColHeaders);

class RowHeaders extends HTMLElement {
  connectedCallback() {
    this.attachShadow({ mode: 'open' });
    const hs = [40, 38, 60, 21, 21, 21, 21, 21, 21, 21, 21, 21, 21, 21, 20, 23, 20, 26, 22, 13, 10];
    this.shadowRoot.innerHTML = `
      <style>
        :host { display: block; width: 23px; flex: none; font: 10px "Liberation Sans", sans-serif; color: #444; overflow: hidden; }
        .r { display: flex; align-items: flex-end; justify-content: center; box-sizing: border-box; border-bottom: 1px solid #bcc2cc; background: #e6e9f0; line-height: 12px; padding-bottom: 1px; overflow: hidden; }
        .tiny { line-height: 10px; padding-bottom: 0; border-bottom: 0; }
        .mid { padding-bottom: 8px; }
        .on { background: linear-gradient(#ffdf80, #ffc63e); }
      </style>
      ${hs.map((h, i) => `<div class="r${i === 0 ? ' on' : ''}${h < 14 ? ' tiny' : ''}${i === 17 ? ' mid' : ''}" style="height:${h}px">${i + 1}</div>`).join('')}`;
  }
}
customElements.define('row-headers', RowHeaders);

class AppBanner extends HTMLElement {
  connectedCallback() {
    this.attachShadow({ mode: 'open' });
    this.shadowRoot.innerHTML = `
      <style>
        :host { display: block; height: 40px; background: #fff; position: relative; }
        .sel { width: 628px; height: 40px; box-sizing: border-box; border: solid #111; border-width: 1px 3px 1px 1px; display: flex; align-items: center; justify-content: space-between; }
        .logo { display: flex; align-items: flex-end; padding-left: 9px; height: 32px; margin-top: 2px; }
        .name { display: inline-block; width: 105px; font: 300 20px Roboto, sans-serif; color: #3d4955; letter-spacing: -.5px; line-height: 24px; transform: scaleX(.88); transform-origin: 0 50%; white-space: nowrap; margin-left: -1px; }
        .firm { font: 700 14px Lato, sans-serif; color: #2d3a49; letter-spacing: .65px; }
        .handle { position: absolute; left: 626px; top: 38px; width: 5px; height: 5px; background: #fff; border: 1px solid #111; box-sizing: border-box; }
      </style>
      <div class="sel">
        <div class="logo"><x-icon name="palm"></x-icon><span class="name">VACATIONIZR</span></div>
        <div class="firm">Mein Firmenname</div>
      </div>
      <div class="handle"></div>`;
  }
}
customElements.define('app-banner', AppBanner);

class NavItem extends HTMLElement {
  connectedCallback() {
    this.attachShadow({ mode: 'open' });
    this.shadowRoot.innerHTML = `
      <style>
        :host { display: flex; align-items: center; height: 38px; box-sizing: border-box; padding-bottom: 2px; color: #eef1f3; font: 300 14.5px Lato, sans-serif; letter-spacing: .3px; white-space: nowrap; flex: none; }
        :host([active]) { background: #a3c644; color: #f2f7e2; }
        .ic { display: flex; margin-right: var(--ic-gap, 2px); }
      </style>
      <span class="ic"><x-icon name="${this.getAttribute('icon')}"></x-icon></span><slot></slot>`;
  }
}
customElements.define('nav-item', NavItem);

class AppNav extends HTMLElement {
  connectedCallback() {
    this.attachShadow({ mode: 'open' });
    this.shadowRoot.innerHTML = `
      <style>:host { display: flex; height: 38px; background: #18202a; padding-left: 25px; }</style>
      <slot></slot>`;
  }
}
customElements.define('app-nav', AppNav);

class SettingsPanel extends HTMLElement {
  connectedCallback() {
    this.attachShadow({ mode: 'open' });
    const left = [['Neujahr', '1/1/2020'], ['Karfreitag', '4/10/2020'], ['Ostersonntag', '4/12/2020'], ['Ostermontag', '4/13/2020'], ['1.Mai', '5/1/2020'], ['Christi Himmelfahrt', '5/21/2020'], ['Pfingstmontag', '6/1/2020'], ['Tag der Deutschen Einheit', '10/3/2020'], ['1.Weihnachtsfeiertag', '12/25/2020'], ['2.Weihnachtsfeiertag', '12/26/2020']];
    const right = [['Freigebene Urlaubstage', 'U', 'The Beatles'], ['Urlaub in Bearbeitung', 'UiB', 'The Rolling Stones'], ['Freigebener Sonderurlaub', 'S', 'Spice Girls'], ['Sonderurlaub in Bearbeitung', 'SiB', ''], ['Andere Abwesenheit', 'A', ''], ['Krank', 'K', '']];
    const tight = ['Tag der Deutschen Einheit', 'The Rolling Stones'];
    const ls = t => tight.includes(t) ? 'letter-spacing:.15px;' : '';
    let cells = `
      <div class="h l">Feiertage</div><div class="h c">Datum des Feiertages</div>
      <div class="h l">Abwesenheitsarten</div><div class="h c">Abwesenheitskürzel</div><div class="h l">Teams</div>`;
    left.forEach((r, i) => {
      const y = i + 3;
      cells += `<div class="d l" style="${ls(r[0])}grid-row:${y};grid-column:1">${r[0]}</div><div class="d c" style="grid-row:${y};grid-column:2">${r[1]}</div>`;
    });
    right.forEach((r, i) => {
      const y = i + 3;
      cells += `<div class="d l" style="grid-row:${y};grid-column:3">${r[0]}</div><div class="d c" style="grid-row:${y};grid-column:4">${r[1]}</div><div class="d l" style="${ls(r[2])}grid-row:${y};grid-column:5">${r[2]}</div>`;
    });
    ['Kalenderjahr', 'Firmenname', 'Version'].forEach((t, i) => cells += `<div class="h c" style="grid-row:9;grid-column:${i + 3}">${t}</div>`);
    ['1/1/2020', 'Mein Firmenname', '1.3'].forEach((t, i) => cells += `<div class="d c" style="grid-row:10;grid-column:${i + 3}">${t}</div>`);
    this.shadowRoot.innerHTML = `
      <style>
        :host { display: block; height: 311px; background: #2e3e50; color: #eef1f3; font: 400 10px Lato, sans-serif; letter-spacing: .35px; box-sizing: border-box; padding-left: 18px; }
        .t { display: grid; grid-template-columns: 132px 121px 118px 118px 101px; grid-template-rows: 60px repeat(12, 21px); }
        .title { grid-column: 1 / 6; grid-row: 1; font: 700 20px Lato, sans-serif; letter-spacing: .2px; color: #fff; display: flex; align-items: center; padding-left: 226px; }
        .h, .d { display: flex; align-items: center; white-space: nowrap; overflow: hidden; box-sizing: border-box; }
        .h { grid-row: 2; letter-spacing: .05px; padding-bottom: 2px; }
        .l { padding-left: 10px; }
        .c { justify-content: center; }
        .d { background: #253342; border-bottom: 1px solid #2c3b4c; border-right: 1px solid #2a3848; }
        .btn { grid-column: 3 / 6; grid-row: 11 / 13; margin-left: 101px; width: 154px; height: 28px; align-self: end; box-sizing: border-box; border: 1px solid #9bb56b; border-radius: 3px; display: flex; align-items: center; justify-content: center; font: 400 10px "Liberation Sans", sans-serif; letter-spacing: -.5px; color: #f2f4f5; white-space: nowrap; }
      </style>
      <div class="t">
        <div class="title">Einstellungen</div>
        ${cells}
        <div class="btn">AUF NEUE VERSION PRÜFEN</div>
      </div>`;
  }
}
customElements.define('settings-panel', SettingsPanel);

class PromoFooter extends HTMLElement {
  connectedCallback() {
    this.attachShadow({ mode: 'open' });
    this.shadowRoot.innerHTML = `
      <style>
        :host { display: block; height: 114px; background: #18202a; overflow: hidden; }
        .legal { display: flex; align-items: center; height: 22px; font: 700 8px "Liberation Sans", sans-serif; letter-spacing: .38px; color: #63696f; white-space: nowrap; padding-left: 8px; }
        .legal .copy { width: 346px; flex: none; letter-spacing: .5px; }
        .pipe { color: #4c5258; font-weight: 400; width: 13px; text-align: center; flex: none; }
        .clip { margin: 21px 0 0 24px; height: 14px; overflow: hidden; display: flex; align-items: flex-end; }
        .clip span { font: 400 23px Lato, sans-serif; line-height: 18px; letter-spacing: .4px; color: #a4c639; white-space: nowrap; }
        .sub { margin: 14px 0 0 21px; font: 300 15px Lato, sans-serif; letter-spacing: .05px; color: #fff; line-height: 18px; white-space: nowrap; }
        .cta { margin: 15px 0 0 18px; width: 261px; height: 14px; background: #a4c639; border-radius: 3px 3px 0 0; }
      </style>
      <div class="legal">
        <span class="copy">© 2020 – VACATIONIZR ist ein Service von ASHAMPOO SYSTEMS</span>
        <x-icon name="mail" style="margin-right:5px"></x-icon>
        <span>Kontakt</span><span class="pipe">|</span>
        <span style="letter-spacing:.2px">Kostenlose Hotline 0800 9739000</span><span class="pipe">|</span>
        <span>Datenschutz</span><span class="pipe">|</span>
        <span>Impressum</span>
      </div>
      <div class="clip"><span>VACATIONIZER ONLINE</span></div>
      <div class="sub">Sichere dir jetzt die Vorteile der Online-Urlaubsverwaltung</div>
      <div class="cta"></div>`;
  }
}
customElements.define('promo-footer', PromoFooter);

class VScroll extends HTMLElement {
  connectedCallback() {
    this.attachShadow({ mode: 'open' });
    this.shadowRoot.innerHTML = `
      <style>
        :host { display: flex; flex-direction: column; width: 19px; height: 518px; flex: none; background: #e4e7ee; box-sizing: border-box; padding: 0 3px 0 0; align-items: stretch; }
        .split { height: 6px; margin: 2px 2px 1px; background: #f0f2f6; border: 1px solid #8c94a0; }
        .arrow { height: 12px; display: flex; align-items: center; justify-content: center; font-size: 9px; color: #5a6470; }
        .thumb { height: 439px; background: linear-gradient(90deg, #f4f5f9, #d9dce6); border: 1px solid #9aa1ad; box-sizing: border-box; display: flex; align-items: center; justify-content: center; }
        .grip { width: 8px; height: 6px; background: repeating-linear-gradient(#8c94a0 0 1px, transparent 1px 2px); }
        .track { flex: 1; }
      </style>
      <div class="split"></div>
      <div class="arrow">▲</div>
      <div class="thumb"><div class="grip"></div></div>
      <div class="track"></div>
      <div class="arrow" style="margin-bottom:1px">▼</div>`;
  }
}
customElements.define('v-scroll', VScroll);

class SheetTabs extends HTMLElement {
  connectedCallback() {
    this.attachShadow({ mode: 'open' });
    this.shadowRoot.innerHTML = `
      <style>
        :host { display: flex; height: 16px; align-items: stretch; background: #e3e7ee; border-bottom: 1px solid #a5acb6; box-sizing: border-box; font-size: 10.5px; letter-spacing: -.1px; color: #3a4856; white-space: nowrap; }
        .nav { width: 59px; display: flex; align-items: center; justify-content: space-around; padding: 0 6px 0 3px; box-sizing: border-box; flex: none; }
        .t { flex: none; display: flex; align-items: center; justify-content: center; background: #e3e7ee; }
        .on { background: #fff; color: #222; }
        .s { flex: none; background: linear-gradient(to top left, transparent calc(50% - .7px), #a8b0bb, transparent calc(50% + .7px)); }
        .fill { flex: 1; }
        .sp { width: 5px; margin: 2px 0; flex: none; background: #f0f2f6; border: 1px solid #8c94a0; box-sizing: border-box; }
        .track { width: 463px; flex: none; background: #e9ecf2; display: flex; }
        .thumb { width: 39px; margin-left: 7px; background: linear-gradient(#f3f5f9, #d8dbe4); border: 1px solid #a4abb6; box-sizing: border-box; display: flex; align-items: center; justify-content: center; }
        .grip { width: 6px; height: 8px; background: repeating-linear-gradient(90deg, #8c94a0 0 1px, transparent 1px 2px); }
        .a { width: 12px; flex: none; display: flex; align-items: center; justify-content: center; }
      </style>
      <div class="nav"><x-icon name="navFirst"></x-icon><x-icon name="navPrev"></x-icon><x-icon name="navNext"></x-icon><x-icon name="navLast"></x-icon></div>
      <div class="t on" style="width:69px">Übersicht</div>
      <div class="s" style="width:10px"></div>
      <div class="t" style="width:84px">Meine Kollegen</div>
      <div class="s" style="width:15px"></div>
      <div class="t" style="width:83px">Personaldaten</div>
      <div class="s" style="width:8px"></div>
      <div class="t on" style="width:87px;font-weight:700;font-size:11px;letter-spacing:0;padding-left:3px;box-sizing:border-box">Einstellungen</div>
      <div class="s" style="width:13px"></div>
      <div class="t" style="width:23px">Hilfe</div>
      <div class="s" style="width:17px"></div>
      <div class="t" style="width:81px">Mehr erfahren</div>
      <div class="s" style="width:18px"></div>
      <div class="t" style="width:16px"><x-icon name="newSheet"></x-icon></div>
      <div class="s" style="width:14px"></div>
      <div class="fill"></div>
      <div class="sp"></div>
      <div class="a" style="margin-left:1px"><x-icon name="navPrev"></x-icon></div>
      <div class="track"><div class="thumb"><div class="grip"></div></div></div>
      <div class="a"><x-icon name="navNext"></x-icon></div>
      <div class="sp" style="margin-left:1px"></div>
      <div style="width:21px;flex:none"></div>`;
  }
}
customElements.define('sheet-tabs', SheetTabs);

class StatusBar extends HTMLElement {
  connectedCallback() {
    this.attachShadow({ mode: 'open' });
    this.shadowRoot.innerHTML = `
      <style>
        :host { display: flex; height: 22px; align-items: center; background: linear-gradient(#e0e4ea, #c9cdd5); color: #4a5560; font-size: 11px; }
        .sep { width: 1px; height: 17px; background: #aab0b9; flex: none; }
        .view { width: 19px; height: 18px; display: flex; align-items: center; justify-content: center; box-sizing: border-box; flex: none; }
        .act { background: linear-gradient(#ffe9a0, #ffd35c); border: 1px solid #d6a93f; border-radius: 2px; }
        .track { width: 102px; height: 9px; flex: none; background: linear-gradient(#a2a8b2, #a2a8b2) center / 100% 1px no-repeat, linear-gradient(#b0b6c0, #b0b6c0) 50px 0 / 1px 100% no-repeat; }
      </style>
      <span style="margin-left:9px;width:40px;flex:none">Ready</span><span class="sep"></span>
      <x-icon name="macro" style="margin:0 10px 0 8px"></x-icon><span class="sep"></span>
      <span style="flex:1"></span>
      <span class="sep" style="margin-right:4px"></span>
      <span class="view act"><x-icon name="viewNormal"></x-icon></span>
      <span class="view" style="margin-left:1px"><x-icon name="viewPage"></x-icon></span>
      <span class="view"><x-icon name="viewBreak"></x-icon></span>
      <span style="width:22px;margin-left:9px;flex:none">74%</span>
      <x-icon name="zoomMinus" style="margin-left:8px"></x-icon>
      <span class="track"></span>
      <x-icon name="thumb" style="margin-left:-69px;margin-right:59px"></x-icon>
      <x-icon name="zoomPlus"></x-icon>
      <span style="width:3px;flex:none"></span>`;
  }
}
customElements.define('status-bar', StatusBar);

class TaskBar extends HTMLElement {
  connectedCallback() {
    this.attachShadow({ mode: 'open' });
    this.shadowRoot.innerHTML = `
      <style>
        :host { display: flex; align-items: center; background: #d4d0c8; border-top: 1px solid #fff; box-sizing: border-box; height: 27px; font: 11px "Liberation Sans", sans-serif; color: #111; }
        .b { height: 22px; display: flex; align-items: center; justify-content: center; box-sizing: border-box; border: 1px solid; border-color: #fff #555 #555 #fff; flex: none; }
        .start { width: 52px; margin-left: 2px; font-weight: 700; font-size: 12px; gap: 1px; }
        .p { width: 31px; }
        .plain { flex: none; display: flex; align-items: center; }
        .pressed { width: 31px; margin-left: 11px; background: #fff; border-color: #555 #fff #fff #555; }
        .tray { margin-left: auto; margin-right: 2px; width: 172px; height: 23px; box-sizing: border-box; border: 1px solid; border-color: #777 #fff #fff #777; display: flex; align-items: center; padding-left: 6px; flex: none; }
        .time { font: 11.5px "Liberation Sans", sans-serif; margin-left: 14px; width: 51px; white-space: nowrap; }
      </style>
      <div class="b start"><x-icon name="winflag"></x-icon>Start</div>
      <div class="b p" style="margin-left:9px"><x-icon name="ie"></x-icon></div>
      <div class="b p" style="margin-left:3px"><x-icon name="folder"></x-icon></div>
      <div class="plain" style="margin-left:10px"><x-icon name="media"></x-icon></div>
      <div class="plain" style="margin-left:17px"><x-icon name="chrome"></x-icon></div>
      <div class="plain" style="margin-left:17px"><x-icon name="opera"></x-icon></div>
      <div class="b pressed"><x-icon name="excel"></x-icon></div>
      <div class="tray">
        <x-icon name="tray2"></x-icon>
        <x-icon name="speaker" style="margin-left:7px"></x-icon>
        <x-icon name="network" style="margin-left:6px"></x-icon>
        <x-icon name="flag" style="margin-left:8px"></x-icon>
        <span class="time">8:47 AM</span>
        <x-icon name="desk"></x-icon>
      </div>`;
  }
}
customElements.define('task-bar', TaskBar);

class AnyRunMark extends HTMLElement {
  connectedCallback() {
    this.attachShadow({ mode: 'open' });
    this.shadowRoot.innerHTML = `
      <style>
        :host { position: absolute; left: 1039px; top: 606px; width: 196px; height: 66px; display: flex; align-items: center; color: rgba(255,255,255,.42); pointer-events: none; }
        span { display: inline-block; font: 400 46px Roboto, sans-serif; line-height: 66px; transform-origin: 0 50%; white-space: nowrap; }
        .a { width: 60px; transform: scaleX(.72); margin-top: 11px; }
        .r { width: 62px; transform: scaleX(.74); margin-top: 11px; margin-left: -9px; }
        svg { flex: none; width: 70px; height: 66px; }
      </style>
      <span class="a">ANY</span>
      <svg viewBox="1100 606 70 66"><path d="M1115 617l-2 38 14 13M1123 611l40 27-43 27M1125 622l30 20-30 16v-36" fill="none" stroke="currentColor" stroke-width="3"/></svg>
      <span class="r">RUN</span>`;
  }
}
customElements.define('any-run-mark', AnyRunMark);

class ExcelWindow extends HTMLElement {
  connectedCallback() {
    this.attachShadow({ mode: 'open' });
    this.shadowRoot.innerHTML = `
      <style>
        :host { display: flex; flex-direction: column; width: 1280px; height: 720px; position: relative; overflow: hidden; }
        .chrome { background: linear-gradient(#e6eaed, #d8dee2); }
        .gap { height: 3px; background: #e9ecf0; }
        .work { display: flex; height: 518px; }
        .main { width: 1261px; flex: none; }
        .sheet { display: flex; height: 503px; overflow: hidden; }
        .page { width: 1238px; flex: none; }
      </style>
      <div class="chrome"><title-bar></title-bar><ribbon-tabs></ribbon-tabs></div>
      <excel-ribbon></excel-ribbon>
      <div class="gap"></div>
      <div class="work">
        <div class="main">
          <col-headers></col-headers>
          <div class="sheet">
            <row-headers></row-headers>
            <div class="page">
              <app-banner></app-banner>
              <app-nav>
                <nav-item icon="home">Übersicht</nav-item>
                <nav-item icon="team" style="margin-left:41px;--ic-gap:0">Meine Kollegen</nav-item>
                <nav-item icon="person" style="margin-left:33px;--ic-gap:1px">Personaldaten</nav-item>
                <nav-item icon="sliders" active style="margin-left:23px;width:134px;padding-left:14px">Einstellungen</nav-item>
                <nav-item icon="" style="margin-left:32px;--ic-gap:0"><span style="display:inline-flex;width:13px;height:13px;border-radius:50%;background:#fff;color:#18202a;align-items:center;justify-content:center;font:700 11px 'Liberation Sans',sans-serif;margin-right:2px;letter-spacing:0">?</span>Hilfe</nav-item>
              </app-nav>
              <settings-panel></settings-panel>
              <promo-footer></promo-footer>
            </div>
          </div>
        </div>
        <v-scroll></v-scroll>
      </div>
      <sheet-tabs></sheet-tabs>
      <status-bar></status-bar>
      <task-bar></task-bar>
      <any-run-mark></any-run-mark>`;
  }
}
customElements.define('excel-window', ExcelWindow);
</script>
</body>
</html>
